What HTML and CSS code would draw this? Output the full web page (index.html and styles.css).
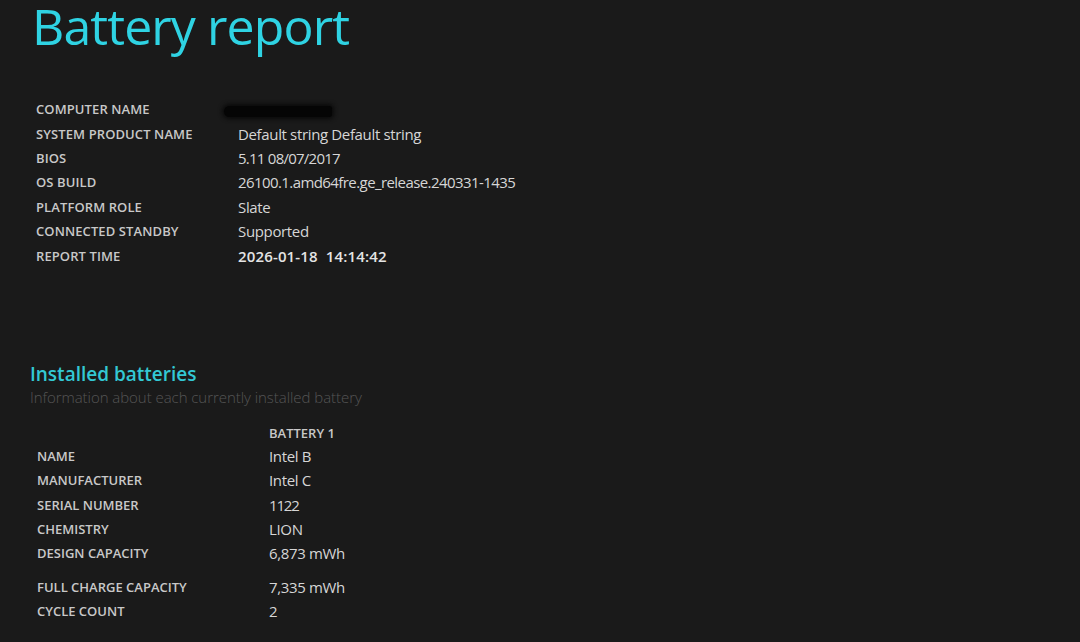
FILE: index.html
```html
<!DOCTYPE html>
<html>
<head>
<meta charset="utf-8">
<title>Battery report</title>
<link rel="stylesheet" href="styles.css">
</head>
<body>
<h1 class="title">Battery report</h1>
<table class="info">
  <tr><td class="label">COMPUTER NAME</td><td class="value"><span class="redact"></span></td></tr>
  <tr><td class="label">SYSTEM PRODUCT NAME</td><td class="value">Default string Default string</td></tr>
  <tr><td class="label">BIOS</td><td class="value num-tight">5.11 08/07/2017</td></tr>
  <tr><td class="label">OS BUILD</td><td class="value num">26100.1.amd64fre.ge_release.240331-1435</td></tr>
  <tr><td class="label">PLATFORM ROLE</td><td class="value">Slate</td></tr>
  <tr><td class="label">CONNECTED STANDBY</td><td class="value">Supported</td></tr>
  <tr><td class="label">REPORT TIME</td><td class="value strong">2026-01-18&nbsp;&nbsp;14:14:42</td></tr>
</table>
<section class="section">
  <h2 class="section-title">Installed batteries</h2>
  <div class="section-sub">Information about each currently installed battery</div>
  <table class="info battery">
    <tr class="head"><td class="label"></td><td class="value-head">BATTERY 1</td></tr>
    <tr><td class="label">NAME</td><td class="value">Intel B</td></tr>
    <tr><td class="label">MANUFACTURER</td><td class="value">Intel C</td></tr>
    <tr><td class="label">SERIAL NUMBER</td><td class="value num-serial">1122</td></tr>
    <tr><td class="label">CHEMISTRY</td><td class="value">LION</td></tr>
    <tr><td class="label">DESIGN CAPACITY</td><td class="value">6,873 mWh</td></tr>
    <tr class="gap"><td class="label">FULL CHARGE CAPACITY</td><td class="value">7,335 mWh</td></tr>
    <tr><td class="label">CYCLE COUNT</td><td class="value">2</td></tr>
  </table>
</section>
</body>
</html>
```
FILE: styles.css
```css
html, body {
  margin: 0;
  padding: 0;
  background: #1a1a1a;
  height: 100%;
  overflow: hidden;
}
body {
  font-family: "Open Sans", "Noto Sans", sans-serif;
  color: #d4d4d4;
  padding: 0 0 0 30px;
}
.title {
  margin: 0 0 0 2px;
  font-weight: 400;
  font-size: 50px;
  letter-spacing: -0.9px;
  line-height: 52px;
  color: #2fd3e3;
}
.info {
  border-collapse: collapse;
  margin: 45px 0 0 6px;
}
.info td {
  padding: 0;
  height: 24.4px;
  vertical-align: middle;
  white-space: nowrap;
}
.label {
  width: 202px;
  font-size: 13px;
  font-weight: 600;
  letter-spacing: 0.1px;
  color: #c8c8c8;
}
.value {
  font-size: 15px;
  letter-spacing: -0.35px;
  color: #d6d6d6;
}
.num {
  letter-spacing: -0.58px;
}
.num-tight {
  letter-spacing: -0.75px;
}
.num-serial {
  letter-spacing: -1.2px;
}
.strong {
  font-weight: 600;
  letter-spacing: 0.15px;
  color: #e4e4e4;
}
.redact {
  display: inline-block;
  width: 108px;
  height: 11px;
  margin-left: -14px;
  border-radius: 6px 3px 3px 6px;
  background: #050505;
  box-shadow: 0 0 4px 2px #0a0a0a;
  vertical-align: middle;
}
.section {
  margin-top: 93px;
}
.section-title {
  margin: 0;
  font-size: 19px;
  font-weight: 600;
  line-height: 26px;
  color: #33c8d4;
}
.section-sub {
  font-size: 15px;
  font-weight: 300;
  line-height: 20px;
  color: #555555;
  letter-spacing: -0.05px;
}
.battery {
  margin: 15px 0 0 7px;
}
.battery .label {
  width: 232px;
  letter-spacing: 0;
}
.value-head {
  font-size: 13px;
  font-weight: 600;
  color: #c8c8c8;
}
.battery .head td {
  height: 22px;
}
.battery .gap td {
  height: 24.4px;
  padding-top: 9px;
}
```
